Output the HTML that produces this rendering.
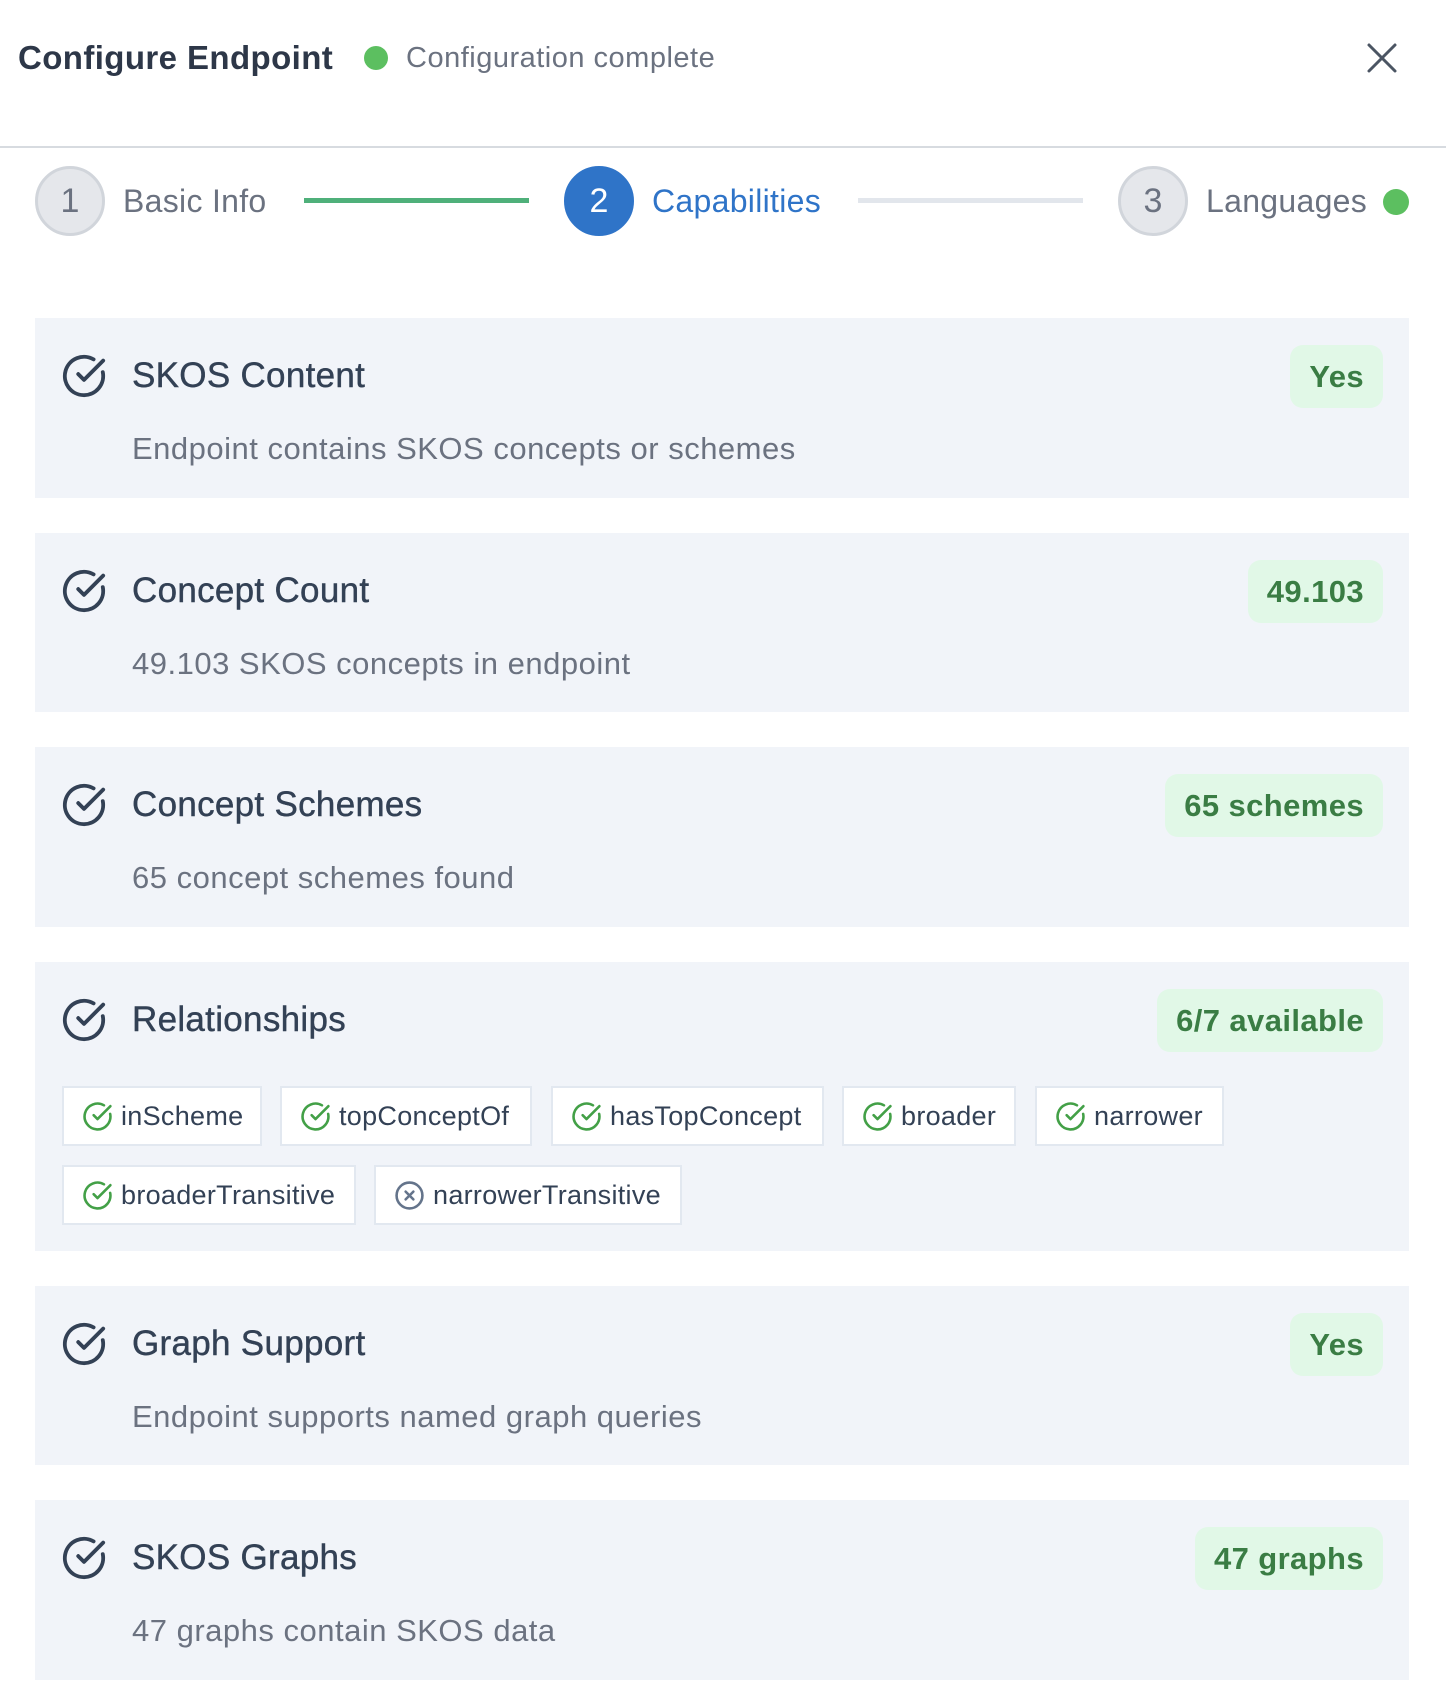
<!DOCTYPE html>
<html><head><meta charset="utf-8"><style>
*{box-sizing:border-box;margin:0;padding:0}
body{width:1446px;height:1704px;background:#fff;font-family:"Liberation Sans",sans-serif;position:relative;overflow:hidden;color:#334155}
.abs{position:absolute}
.title{left:18px;top:38px;font-size:33px;font-weight:bold;color:#2d3748;white-space:nowrap;line-height:40px;letter-spacing:0.4px}
.dot{border-radius:50%;background:#5cbf60}
.sub{left:406px;top:40px;font-size:29px;color:#6b7280;line-height:36px;letter-spacing:0.5px}
.hr{left:0;top:146px;width:1446px;height:2px;background:#d7dbe0}
.circ{width:70px;height:70px;border-radius:50%;background:#e5e7eb;border:3px solid #d1d5db;font-size:34px;color:#6b7280;display:flex;align-items:center;justify-content:center;top:166px}
.slabel{top:181px;font-size:32px;line-height:40px;color:#6b7280;letter-spacing:0.3px}
.card{left:35px;width:1374px;background:#f1f4f9}
.ic{position:absolute;left:26px;top:35px}
.ct{position:absolute;left:97px;top:36px;font-size:35px;line-height:44px;color:#334155;-webkit-text-stroke:0.4px #334155;letter-spacing:0.3px}
.cd{position:absolute;left:97px;top:113px;font-size:31px;line-height:36px;color:#6b7280;letter-spacing:0.5px}
.badge{position:absolute;right:26px;top:27px;height:63px;padding:0 19px;border-radius:13px;background:#e1f8e7;color:#3a7d44;font-weight:bold;font-size:31px;line-height:63px;letter-spacing:0.4px}
.chip{position:absolute;height:60px;background:#fff;border:2px solid #e2e8f0;font-size:27px;color:#334155;display:flex;align-items:center;padding-left:18px;white-space:nowrap;letter-spacing:0.3px}
.chip svg{margin-right:8px;flex:none}
</style></head><body>
<div class="abs title">Configure Endpoint</div>
<div class="abs dot" style="left:364px;top:46px;width:24px;height:24px"></div>
<div class="abs sub">Configuration complete</div>
<svg class="abs" style="left:1366px;top:42px" width="32" height="32" viewBox="0 0 32 32"><path d="M3 3L29 29M29 3L3 29" stroke="#4b5563" stroke-width="3" stroke-linecap="round"/></svg>
<div class="abs hr"></div>

<div class="abs circ" style="left:35px">1</div>
<div class="abs slabel" style="left:123px">Basic Info</div>
<div class="abs" style="left:304px;top:198px;width:225px;height:5px;background:#4fb07a"></div>
<div class="abs circ" style="left:564px;background:#2f74c8;border-color:#2f74c8;color:#fff">2</div>
<div class="abs slabel" style="left:652px;color:#2f74c8">Capabilities</div>
<div class="abs" style="left:858px;top:198px;width:225px;height:5px;background:#e2e6ec"></div>
<div class="abs circ" style="left:1118px">3</div>
<div class="abs slabel" style="left:1206px">Languages</div>
<div class="abs dot" style="left:1383px;top:189px;width:26px;height:26px"></div>

<div class="abs card" style="top:318px;height:180px">
<svg class="ic" width="46" height="46" viewBox="0 0 24 24" fill="none" stroke="#334155" stroke-width="2" stroke-linecap="round" stroke-linejoin="round"><path d="M21.801 10A10 10 0 1 1 17 3.335"/><path d="m9 11 3 3L22 4"/></svg>
<div class="ct">SKOS Content</div><div class="badge">Yes</div>
<div class="cd">Endpoint contains SKOS concepts or schemes</div></div>

<div class="abs card" style="top:533px;height:179px">
<svg class="ic" width="46" height="46" viewBox="0 0 24 24" fill="none" stroke="#334155" stroke-width="2" stroke-linecap="round" stroke-linejoin="round"><path d="M21.801 10A10 10 0 1 1 17 3.335"/><path d="m9 11 3 3L22 4"/></svg>
<div class="ct">Concept Count</div><div class="badge">49.103</div>
<div class="cd">49.103 SKOS concepts in endpoint</div></div>

<div class="abs card" style="top:747px;height:180px">
<svg class="ic" width="46" height="46" viewBox="0 0 24 24" fill="none" stroke="#334155" stroke-width="2" stroke-linecap="round" stroke-linejoin="round"><path d="M21.801 10A10 10 0 1 1 17 3.335"/><path d="m9 11 3 3L22 4"/></svg>
<div class="ct">Concept Schemes</div><div class="badge">65 schemes</div>
<div class="cd">65 concept schemes found</div></div>

<div class="abs card" style="top:962px;height:289px">
<svg class="ic" width="46" height="46" viewBox="0 0 24 24" fill="none" stroke="#334155" stroke-width="2" stroke-linecap="round" stroke-linejoin="round"><path d="M21.801 10A10 10 0 1 1 17 3.335"/><path d="m9 11 3 3L22 4"/></svg>
<div class="ct">Relationships</div><div class="badge">6/7 available</div>
</div>

<div class="chip" style="left:62px;top:1086px;width:200px"><svg width="31" height="31" viewBox="0 0 24 24" fill="none" stroke="#43a047" stroke-width="2" stroke-linecap="round" stroke-linejoin="round"><path d="M21.801 10A10 10 0 1 1 17 3.335"/><path d="m9 11 3 3L22 4"/></svg>inScheme</div>
<div class="chip" style="left:280px;top:1086px;width:252px"><svg width="31" height="31" viewBox="0 0 24 24" fill="none" stroke="#43a047" stroke-width="2" stroke-linecap="round" stroke-linejoin="round"><path d="M21.801 10A10 10 0 1 1 17 3.335"/><path d="m9 11 3 3L22 4"/></svg>topConceptOf</div>
<div class="chip" style="left:551px;top:1086px;width:273px"><svg width="31" height="31" viewBox="0 0 24 24" fill="none" stroke="#43a047" stroke-width="2" stroke-linecap="round" stroke-linejoin="round"><path d="M21.801 10A10 10 0 1 1 17 3.335"/><path d="m9 11 3 3L22 4"/></svg>hasTopConcept</div>
<div class="chip" style="left:842px;top:1086px;width:174px"><svg width="31" height="31" viewBox="0 0 24 24" fill="none" stroke="#43a047" stroke-width="2" stroke-linecap="round" stroke-linejoin="round"><path d="M21.801 10A10 10 0 1 1 17 3.335"/><path d="m9 11 3 3L22 4"/></svg>broader</div>
<div class="chip" style="left:1035px;top:1086px;width:189px"><svg width="31" height="31" viewBox="0 0 24 24" fill="none" stroke="#43a047" stroke-width="2" stroke-linecap="round" stroke-linejoin="round"><path d="M21.801 10A10 10 0 1 1 17 3.335"/><path d="m9 11 3 3L22 4"/></svg>narrower</div>
<div class="chip" style="left:62px;top:1165px;width:294px"><svg width="31" height="31" viewBox="0 0 24 24" fill="none" stroke="#43a047" stroke-width="2" stroke-linecap="round" stroke-linejoin="round"><path d="M21.801 10A10 10 0 1 1 17 3.335"/><path d="m9 11 3 3L22 4"/></svg>broaderTransitive</div>
<div class="chip" style="left:374px;top:1165px;width:308px"><svg width="31" height="31" viewBox="0 0 24 24" fill="none" stroke="#64748b" stroke-width="2" stroke-linecap="round" stroke-linejoin="round"><circle cx="12" cy="12" r="10"/><path d="m15 9-6 6M9 9l6 6"/></svg>narrowerTransitive</div>

<div class="abs card" style="top:1286px;height:179px">
<svg class="ic" width="46" height="46" viewBox="0 0 24 24" fill="none" stroke="#334155" stroke-width="2" stroke-linecap="round" stroke-linejoin="round"><path d="M21.801 10A10 10 0 1 1 17 3.335"/><path d="m9 11 3 3L22 4"/></svg>
<div class="ct">Graph Support</div><div class="badge">Yes</div>
<div class="cd">Endpoint supports named graph queries</div></div>

<div class="abs card" style="top:1500px;height:180px">
<svg class="ic" width="46" height="46" viewBox="0 0 24 24" fill="none" stroke="#334155" stroke-width="2" stroke-linecap="round" stroke-linejoin="round"><path d="M21.801 10A10 10 0 1 1 17 3.335"/><path d="m9 11 3 3L22 4"/></svg>
<div class="ct">SKOS Graphs</div><div class="badge">47 graphs</div>
<div class="cd">47 graphs contain SKOS data</div></div>
</body></html>
